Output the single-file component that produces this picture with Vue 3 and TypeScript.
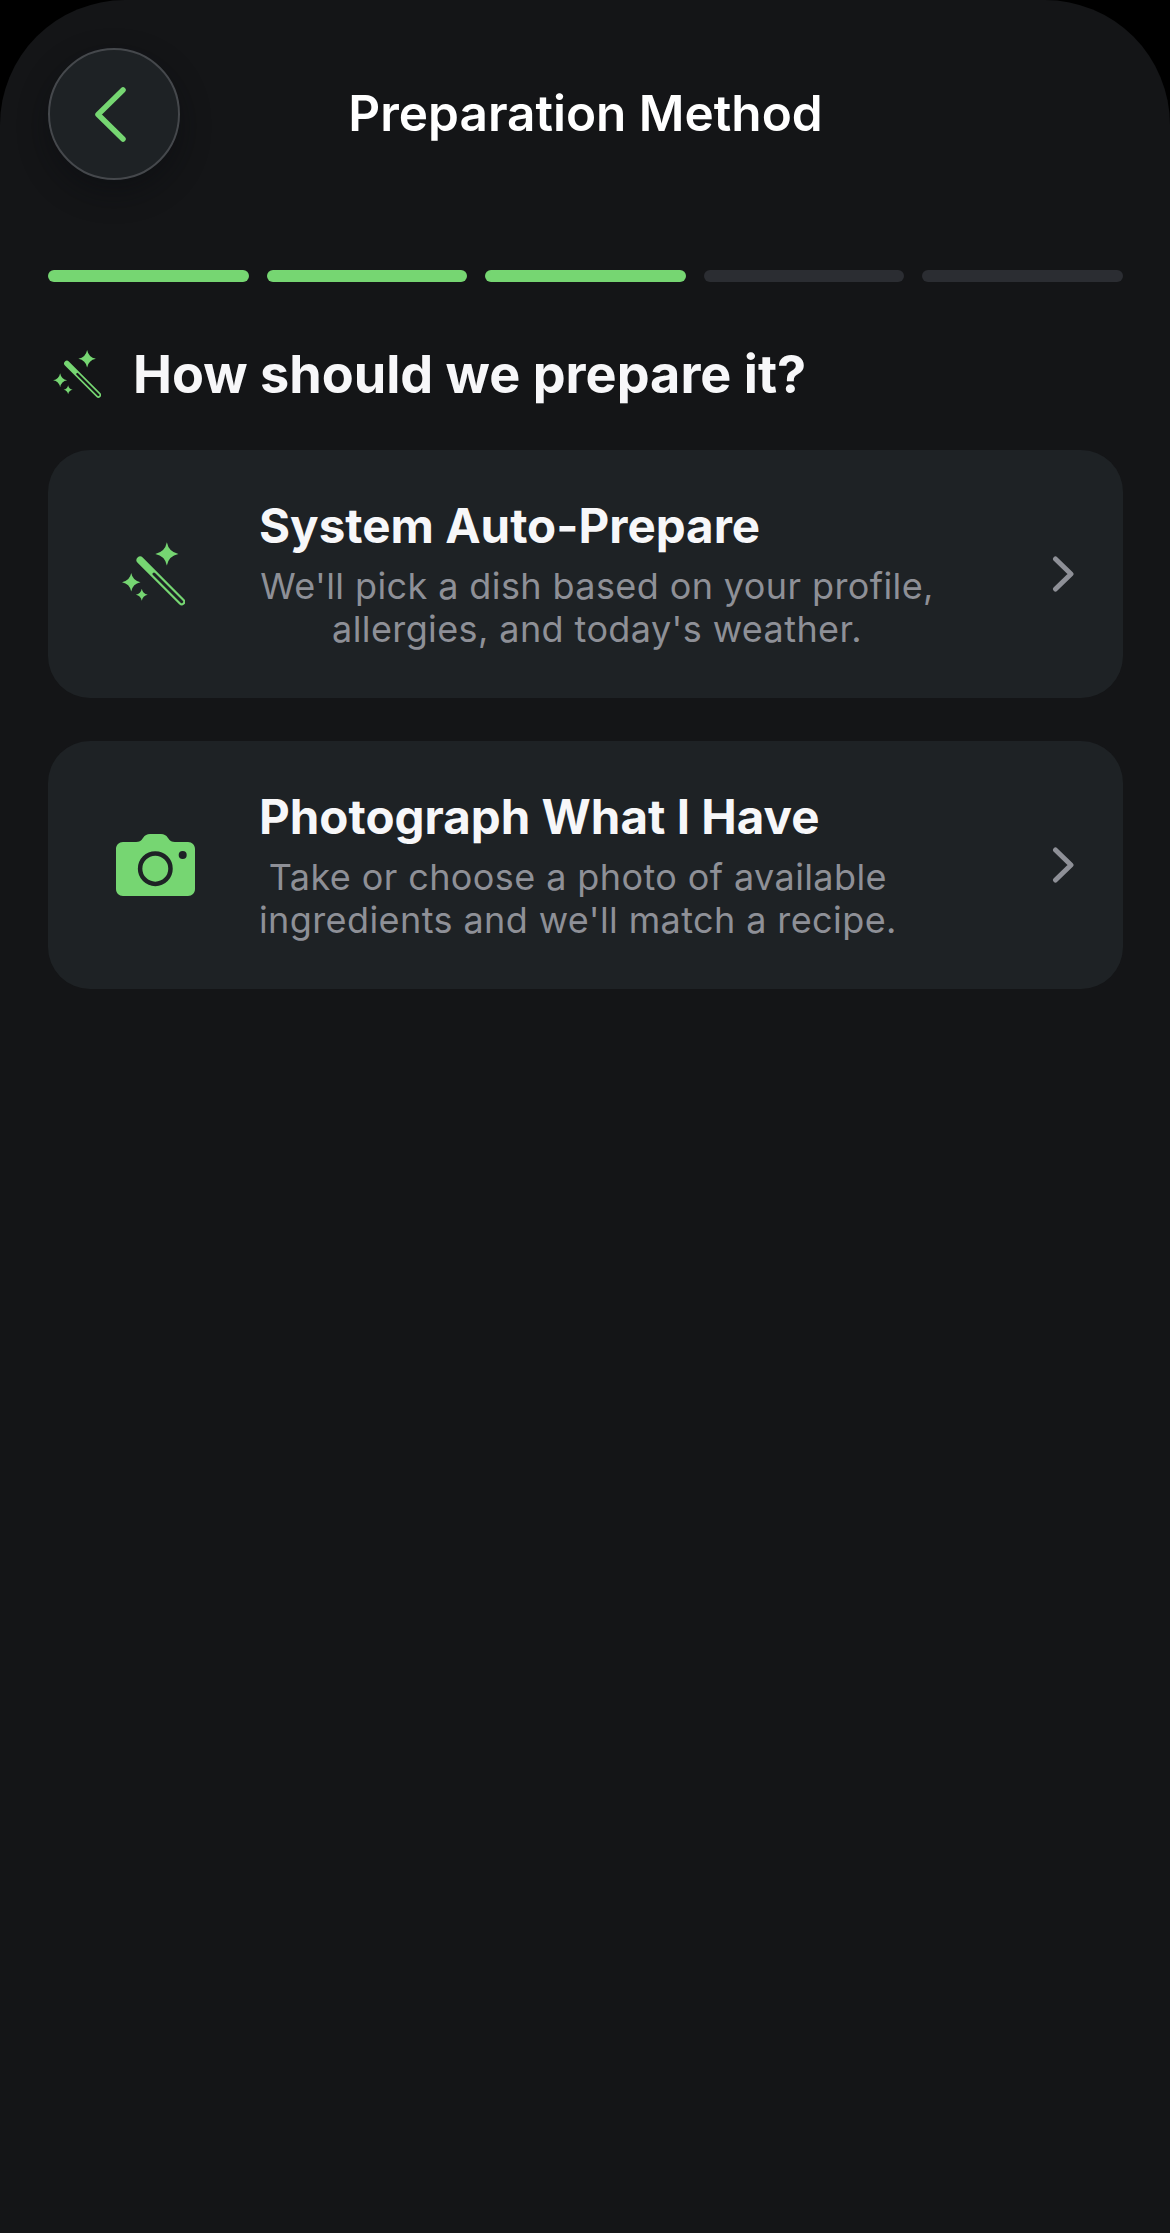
<template>
  <div class="screen">
    <header class="top">
      <button class="back" aria-label="Back">
        <svg width="36" height="60" viewBox="0 0 36 60" fill="none">
          <path d="M31 6 L6 30.500 L31 55" stroke="#76d672" stroke-width="5.500" stroke-linecap="round" stroke-linejoin="round" />
        </svg>
      </button>
      <h1 class="title">Preparation Method</h1>
    </header>

    <div class="progress">
      <div v-for="i in 5" :key="i" class="seg" :class="{ done: i <= 3 }"></div>
    </div>

    <div class="heading">
      <svg class="wand-sm" width="48" height="48" viewBox="0 0 191 192">
        <path :d="wandPath" fill="#76d672" fill-rule="evenodd" />
      </svg>
      <h2>How should we prepare it?</h2>
    </div>

    <div class="cards">
      <div class="card">
        <div class="card-icon">
          <svg class="wand-lg" width="63" height="64" viewBox="0 0 191 192">
            <path :d="wandPath" fill="#76d672" fill-rule="evenodd" />
          </svg>
        </div>
        <div class="card-text">
          <div class="card-title">System Auto-Prepare</div>
          <div class="card-desc wide">We'll pick a dish based on your profile,<br />allergies, and today's weather.</div>
        </div>
        <svg class="chev" width="24" height="36" viewBox="0 0 24 36" fill="none">
          <path d="M3.500 3 L19 18 L3.500 33" stroke="#8e9097" stroke-width="5" stroke-linecap="round" stroke-linejoin="round" />
        </svg>
      </div>

      <div class="card">
        <div class="card-icon">
          <svg class="camera" width="79" height="62" viewBox="0 0 79 62">
            <path fill="#76d672" d="M7 8 H20 C23 8 25 7 27 4 C29 1 31 0 34 0 H45 C48 0 50 1 52 4 C54 7 56 8 59 8 H72 C76 8 79 11 79 15 V55 C79 59 76 62 72 62 H7 C3 62 0 59 0 55 V15 C0 11 3 8 7 8 Z" />
            <circle cx="39.300" cy="34.700" r="15.200" fill="none" stroke="#1e2225" stroke-width="4.500" />
            <circle cx="66.700" cy="21" r="4" fill="#1e2225" />
          </svg>
        </div>
        <div class="card-text">
          <div class="card-title">Photograph What I Have</div>
          <div class="card-desc">Take or choose a photo of available<br />ingredients and we'll match a recipe.</div>
        </div>
        <svg class="chev" width="24" height="36" viewBox="0 0 24 36" fill="none">
          <path d="M3.500 3 L19 18 L3.500 33" stroke="#8e9097" stroke-width="5" stroke-linecap="round" stroke-linejoin="round" />
        </svg>
      </div>
    </div>
  </div>
</template>

<script setup lang="ts">
// Four-pointed sparkle, pinched towards the centre
function star(cx: number, cy: number, r: number): string {
  const k = r * 0.16
  return `M${cx} ${cy - r} Q${cx + k} ${cy - k} ${cx + r} ${cy} Q${cx + k} ${cy + k} ${cx} ${cy + r} Q${cx - k} ${cy + k} ${cx - r} ${cy} Q${cx - k} ${cy - k} ${cx} ${cy - r} Z`
}

// Wand body plus the hollow slot in its lower part (evenodd cuts it out)
const wandBody = 'M62.800 46.200 L188.800 172.200 A11 11 0 0 1 173.200 187.800 L47.200 61.800 A11 11 0 0 1 62.800 46.200 Z'
const wandSlot = 'M100.200 92.800 L184.200 176.800 A4.500 4.500 0 0 1 177.800 183.200 L93.800 99.200 A4.500 4.500 0 0 1 100.200 92.800 Z'
const wandPath = [wandBody, wandSlot, star(136, 35, 35), star(28, 121, 28), star(60, 159, 18)].join(' ')
</script>

<style>
html, body { background: #000; }
</style>

<style scoped>
.screen {
  box-sizing: border-box;
  height: 2233px;
  background: #141517;
  border-radius: 125px 125px 0 0;
  padding: 48px 47px 48px 48px;
  font-family: Inter, "Liberation Sans", sans-serif;
  color: #f7f7f9;
  overflow: hidden;
}
.top {
  position: relative;
  height: 132px;
  display: flex;
  align-items: center;
  justify-content: center;
}
.back {
  position: absolute;
  left: 0;
  top: 0;
  box-sizing: border-box;
  width: 132px;
  height: 132px;
  border-radius: 50%;
  background: #1e2225;
  border: 2px solid #45484c;
  box-shadow: 0 12px 30px rgba(8, 12, 16, 0.45);
  display: flex;
  align-items: center;
  justify-content: center;
  padding: 0 8px 0 0;
}
.title {
  margin: 0 0 2px;
  font-size: 49.500px;
  font-weight: 600;
  color: #fff;
}
.progress {
  display: flex;
  gap: 18px;
  margin-top: 90px;
}
.seg {
  flex: 1;
  height: 12px;
  border-radius: 6px;
  background: #2b2d32;
}
.seg.done { background: #76d672; }
.heading {
  display: flex;
  align-items: center;
  margin-top: 54px;
  height: 76px;
}
.wand-sm {
  margin: 0 32px 0 5px;
  flex: none;
}
.heading h2 {
  margin: 0;
  font-size: 52.200px;
  font-weight: 700;
}
.cards {
  display: flex;
  flex-direction: column;
  gap: 43px;
  margin-top: 38px;
}
.card {
  box-sizing: border-box;
  height: 248px;
  border-radius: 42px;
  background: #1e2225;
  display: flex;
  align-items: center;
  padding: 0 47px 0 0;
}
.card-icon {
  box-sizing: border-box;
  width: 211px;
  padding-left: 3px;
  flex: none;
  display: flex;
  justify-content: center;
}
.wand-lg { margin-left: -3px; }
.card-text {
  flex: 1;
  display: flex;
  flex-direction: column;
  align-items: flex-start;
}
.card-title {
  font-size: 47.500px;
  font-weight: 700;
  line-height: 56px;
}
.card-desc {
  margin-top: 11px;
  font-size: 36px;
  line-height: 43px;
  letter-spacing: 0.4px;
  text-align: center;
  color: #8e9097;
}
.card-desc.wide { width: 676px; }
.chev { flex: none; }
</style>
